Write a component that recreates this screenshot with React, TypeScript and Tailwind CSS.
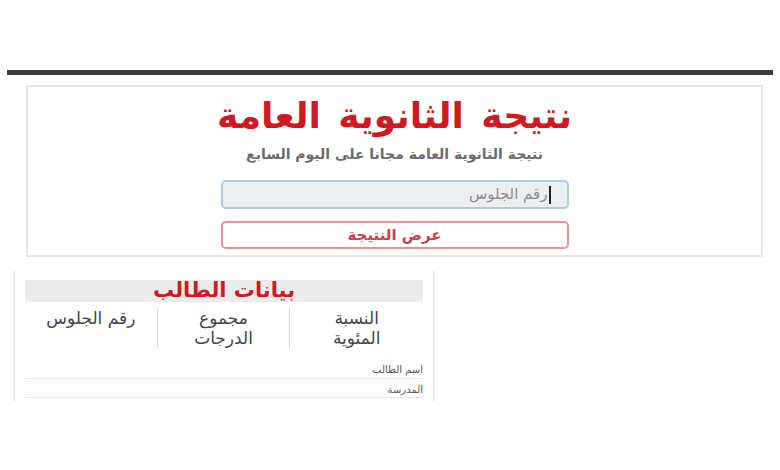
const font = { fontFamily: '"DejaVu Sans", "Noto Sans", sans-serif' };

// نتيجة الثانوية العامة — search card and student data table
function SearchCard() {
  return (
    <div dir="rtl" className="ml-[26px] mt-[10px] flex h-[172px] w-[737px] flex-col items-center border-2 border-[#e6e6e6] bg-white">
      <h1 className="mt-[9px] text-[36px] font-bold leading-[40px] text-[#cf1a22] [word-spacing:5px]">
        نتيجة الثانوية العامة
      </h1>
      <p className="mt-[9px] text-[14px] font-bold leading-[18px] text-[#6b6b6b]">
        نتيجة الثانوية العامة مجانا على اليوم السابع
      </p>
      <div className="mt-[17px] flex h-[29px] w-[348px] items-center justify-start rounded-[5px] border-2 border-[#a9cbe3] bg-[#eceef0] pr-[16px]">
        <span className="h-[18px] w-[2px] bg-[#222]" />
        <span className="mr-[1px] text-[15px] text-[#8c8c8c]">رقم الجلوس</span>
      </div>
      <button className="mt-[12px] flex h-[28px] w-[348px] items-center justify-center rounded-[5px] border-2 border-[#e3919b] bg-white text-[15px] font-bold text-[#c2434d]">
        عرض النتيجة
      </button>
    </div>
  );
}

function StudentTable() {
  return (
    <div dir="rtl" className="ml-[13px] mt-[14px] flex h-[130px] w-[422px] flex-col border-x-2 border-[#ececec] px-[10px] pt-[9px]">
      <div className="flex h-[22px] w-[398px] items-center justify-center bg-[#ebebeb]">
        <span className="text-[21px] font-bold text-[#cf1a22]">بيانات الطالب</span>
      </div>
      <div className="mt-[6px] grid w-[398px] grid-cols-3 text-[17px] leading-[20px] text-[#444]">
        <div className="flex h-[40px] flex-col items-center">
          <span>النسبة</span>
          <span>المئوية</span>
        </div>
        <div className="flex h-[40px] flex-col items-center border-r border-[#d6d6d6]">
          <span>مجموع</span>
          <span>الدرجات</span>
        </div>
        <div className="flex h-[40px] flex-col items-center border-r border-[#d6d6d6]">
          <span>رقم الجلوس</span>
        </div>
      </div>
      <div className="mt-[12px] w-[398px] text-[10px] text-[#555]">
        <div className="h-[19px] border-b border-[#e6e6e6] pt-[2px]">اسم الطالب</div>
        <div className="h-[19px] border-b border-[#e6e6e6] pt-[3px]">المدرسة</div>
      </div>
    </div>
  );
}

export default function App() {
  return (
    <div className="h-[470px] w-[780px] overflow-hidden bg-white" style={font}>
      <div className="mt-[70px] ml-[7px] h-[5px] w-[766px] bg-[#3b3b3b]" />
      <SearchCard />
      <StudentTable />
    </div>
  );
}
